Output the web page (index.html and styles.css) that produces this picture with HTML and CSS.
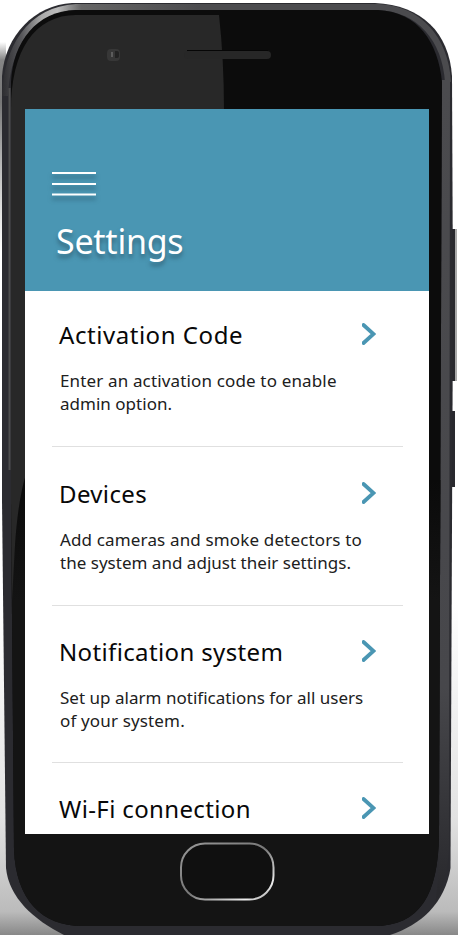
FILE: index.html
```html
<!DOCTYPE html>
<html lang="en">
<head>
<meta charset="utf-8">
<title>Settings</title>
<link rel="stylesheet" href="styles.css">
</head>
<body>
<div class="phone">
  <svg class="shell" viewBox="0 0 458 935" aria-hidden="true">
    <defs>
      <linearGradient id="backdrop" x1="0" y1="0" x2="0" y2="1">
        <stop offset="0" stop-color="#fff"/><stop offset=".07" stop-color="#fff"/>
        <stop offset=".1" stop-color="#858585"/><stop offset=".17" stop-color="#777"/>
        <stop offset=".28" stop-color="#bbb"/><stop offset=".36" stop-color="#e5e5e5"/>
        <stop offset=".42" stop-color="#fff"/><stop offset=".64" stop-color="#fff"/>
      </linearGradient>
      <linearGradient id="floor" x1="0" y1="0" x2="0" y2="1">
        <stop offset="0" stop-color="#fff"/><stop offset=".65" stop-color="#e2e2e2"/><stop offset=".93" stop-color="#bbb"/><stop offset="1" stop-color="#888"/>
      </linearGradient>
      <linearGradient id="rim" gradientUnits="userSpaceOnUse" x1="2" y1="0" x2="200" y2="0">
        <stop offset="0" stop-color="#2d2d30"/><stop offset=".1" stop-color="#58585b"/>
        <stop offset=".2" stop-color="#aaa"/><stop offset=".28" stop-color="#bbb"/><stop offset=".4" stop-color="#666"/>
        <stop offset="1" stop-color="#4b4b4e"/>
      </linearGradient>
      <linearGradient id="side" gradientUnits="userSpaceOnUse" x1="0" y1="80" x2="0" y2="890">
        <stop offset="0" stop-color="#4b4b4e"/><stop offset=".75" stop-color="#47474b"/><stop offset="1" stop-color="#29292d"/>
      </linearGradient>
      <linearGradient id="panel" gradientUnits="userSpaceOnUse" x1="0" y1="480" x2="0" y2="600">
        <stop offset="0" stop-color="#0a0a0a"/><stop offset="1" stop-color="#141414"/>
      </linearGradient>
      <linearGradient id="ring" x1="0" y1="0" x2="1" y2="1">
        <stop offset="0" stop-color="#999"/><stop offset=".5" stop-color="#777"/><stop offset=".85" stop-color="#eee"/><stop offset="1" stop-color="#888"/>
      </linearGradient>
      <clipPath id="glass"><path d="M76 10H378C418 12 438 42 442 82L439 835C438 895 420 926 374 926H82C42 926 16 900 14 850L11 500V82C13 42 36 11 76 10Z"/></clipPath>
    </defs>
    <rect width="458" height="935" fill="#fff"/>
    <rect width="6" height="600" fill="url(#backdrop)"/>
    <rect y="600" width="458" height="335" fill="url(#floor)"/>
    <path d="M450 229H455V381H450M450 411H455V487H450" fill="#29292e"/>
    <path d="M456 229V381" stroke="#aaa" stroke-width="2"/>
    <path d="M72 3H375C422 5 449 33 452 76L453 300L450.500 868C445 903 421 925 390 935H64C34 920 9 898 6 868L2 500V76C5 35 35 5 72 3Z" fill="#2b2b30"/>
    <path d="M5 96C7 48 29 10 76 7H378C420 9 445 39 448 82" fill="none" stroke="url(#rim)" stroke-width="6"/>
    <path d="M442 80H450L449 850Q446 885 435 904Q439 880 439 835Z" fill="url(#side)"/>
    <g clip-path="url(#glass)">
      <rect x="11" y="10" width="432" height="916" fill="#0c0c0c"/>
      <rect x="11" y="480" width="432" height="446" fill="url(#panel)"/>
      <path d="M11 110C11 50 35 15 76 15H219Q224 60 224 110L26 474Q18 500 15 545L11 620Z" fill="#282828"/>
    </g>
    <path d="M9.500 88V470" stroke="#4d4d4d" stroke-width="2"/>
    <rect x="107" y="49" width="13" height="12" rx="4" fill="#373737"/>
    <path d="M115 51h2q2 0 2 2v3q0 2-2 2h-2z" fill="#222"/><path d="M112 52v5" stroke="#5c5c5c" stroke-width="2"/>
    <rect x="184" y="51" width="87" height="8" rx="4" fill="#272727"/>
    <path d="M187 50.500H268" stroke="#060606"/>
    <rect x="181" y="843.500" width="92.500" height="56" rx="24" fill="#101010" stroke="url(#ring)" stroke-width="2"/>
  </svg>
  <main class="screen">
    <header class="header">
      <svg class="menu" viewBox="0 0 44 26" role="img" aria-label="Menu"><path d="M0 3H44M0 14H44M0 24.500H44"/></svg>
      <h1 class="title">Settings</h1>
    </header>
    <section class="item first">
      <div class="heading"><h2 class="name name-code">Activation Code</h2><svg class="chevron" viewBox="0 0 14 22"><path d="M1.500 2L11.500 11L1.500 20"/></svg></div>
      <p class="text"><span class="loose">Enter an activation code to enable</span><br>admin option.</p>
    </section>
    <section class="item devices">
      <div class="heading"><h2 class="name">Devices</h2><svg class="chevron" viewBox="0 0 14 22"><path d="M1.500 2L11.500 11L1.500 20"/></svg></div>
      <p class="text"><span class="loose">Add cameras and smoke detectors to</span><br>the system and adjust their settings.</p>
    </section>
    <section class="item notify">
      <div class="heading"><h2 class="name">Notification system</h2><svg class="chevron" viewBox="0 0 14 22"><path d="M1.500 2L11.500 11L1.500 20"/></svg></div>
      <p class="text">Set up alarm notifications for all users<br><span class="loose">of your system.</span></p>
    </section>
    <section class="item last">
      <div class="heading"><h2 class="name">Wi-Fi connection</h2><svg class="chevron" viewBox="0 0 14 22"><path d="M1.500 2L11.500 11L1.500 20"/></svg></div>
    </section>
  </main>
</div>
</body>
</html>
```
FILE: styles.css
```css
* { box-sizing: border-box; }
body { margin: 0; font-family: "Noto Sans", sans-serif; overflow: hidden; }
.phone { position: relative; width: 458px; height: 935px; padding: 109px 29px 101px 25px; overflow: hidden; }
.shell { position: absolute; inset: 0; width: 458px; height: 935px; }
.screen { position: relative; width: 404px; height: 725px; background: #fff; overflow: hidden; }
.header { height: 182px; background: #4a96b3; padding: 61px 0 0 27px; color: #fff; }
.menu { display: block; width: 44px; height: 26px; overflow: visible; filter: drop-shadow(0 4px 2px #31677e); }
.menu path { fill: none; stroke: #fff; stroke-width: 2.2; }
.title { margin: 21px 0 0 4px; font-size: 34px; line-height: 48px; font-weight: 400; text-shadow: 0 4px 4px #34677d; letter-spacing: -.25px; }
.item { height: 159px; margin: 0 26px 0 27px; padding: 28px 27px 0 7px; border-bottom: 1px solid #e0e0e0; }
.first { height: 156px; padding-top: 26px; }
.devices { padding-top: 29px; }
.notify { height: 157px; }
.last { border: 0; }
.heading { display: flex; justify-content: space-between; height: 36px; align-items: center; }
.name { margin: 0; font-size: 24px; line-height: 36px; font-weight: 400; color: #080808; white-space: nowrap; letter-spacing: .36px; }
.name-code { letter-spacing: .55px; }
.chevron { width: 14px; height: 22px; margin-bottom: 3px; }
.chevron path { fill: none; stroke: #4a96b3; stroke-width: 3.8; stroke-linecap: round; }
.text { margin: 16px 0 0 1px; font-size: 17px; line-height: 23px; color: #202020; white-space: nowrap; letter-spacing: .02px; }
.loose { letter-spacing: .15px; }
```
